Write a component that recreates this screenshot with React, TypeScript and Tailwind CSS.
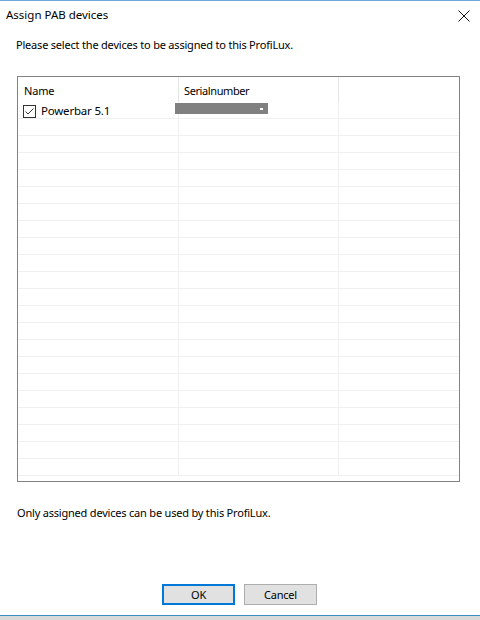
import React from "react";

// grid rows under the header, the first one holds the device
const rowCount = 22;

const font = { fontFamily: '"Noto Sans", "Open Sans", sans-serif' };

export default function App() {
	const rows = Array.from({ length: rowCount }, (_, i) => i);

	return (
		<div
			className="w-[480px] h-[620px] bg-white flex flex-col text-[11px] tracking-[-0.2px] text-black overflow-hidden"
			style={font}
		>
			<div className="h-px bg-[#6fa8dc]" />

			{/* title bar */}
			<div className="h-[28px] flex items-center justify-between pl-[6px] pr-[10px]">
				<span className="leading-none text-[11.5px] tracking-normal">Assign PAB devices</span>
				<svg width="12" height="12" viewBox="0 0 12 12" className="mt-[1px]">
					<path d="M0.5 0.5 L11.5 11.5 M11.5 0.5 L0.5 11.5" stroke="#111" strokeWidth="1" />
				</svg>
			</div>

			<div className="pl-[16px] mt-[8px] leading-[16px]">
				Please select the devices to be assigned to this ProfiLux.
			</div>

			{/* device list */}
			<div className="mt-[23px] ml-[17px] w-[443px] h-[406px] border border-[#828282] flex flex-col">
				<div className="h-[25px] flex shrink-0">
					<div className="w-[161px] pl-[6px] pt-[6px] border-r border-[#e5e5e5]">Name</div>
					<div className="w-[160px] pl-[5px] pt-[6px] border-r border-[#e5e5e5] tracking-[-0.4px]">
						Serialnumber
					</div>
					<div className="flex-1" />
				</div>
				<div className="flex-1 relative">
					{rows.map((i) => (
						<div key={i} className="h-[17px] flex border-b border-[#f0f0f0] relative">
							<div className="w-[161px] border-r border-[#f0f0f0] flex items-end">
								{i === 0 && (
									<>
										<div className="ml-[5px] w-[13px] h-[13px] border border-[#333] flex items-center justify-center">
											<svg width="11" height="11" viewBox="0 0 11 11">
												<path d="M1.5 5.5 L4 8 L9.5 2.5" fill="none" stroke="#333" strokeWidth="1" />
											</svg>
										</div>
										<span className="ml-[5px] leading-[14px] text-[11.5px]">Powerbar 5.1</span>
									</>
								)}
							</div>
							<div className="w-[160px] border-r border-[#f0f0f0]" />
							<div className="flex-1" />
							{i === 0 && (
								<div className="absolute left-[157px] top-[1px] w-[93px] h-[11px] bg-[#808080]">
									<div className="absolute left-[85px] top-[5px] w-[3px] h-[2px] bg-white" />
								</div>
							)}
						</div>
					))}
				</div>
			</div>

			<div className="pl-[17px] mt-[23px] leading-[16px]">
				Only assigned devices can be used by this ProfiLux.
			</div>

			{/* buttons */}
			<div className="mt-auto flex gap-[9px] pl-[162px] mb-[10px]">
				<button className="w-[73px] h-[21px] bg-[#e1e1e1] border-2 border-[#0078d7] flex items-center justify-center leading-none">
					OK
				</button>
				<button className="w-[73px] h-[21px] bg-[#e1e1e1] border border-[#adadad] flex items-center justify-center leading-none">
					Cancel
				</button>
			</div>

			<div className="h-px bg-[#3c8dc5]" />
			<div className="h-[4px] bg-[#d9d9d9]" />
		</div>
	);
}
